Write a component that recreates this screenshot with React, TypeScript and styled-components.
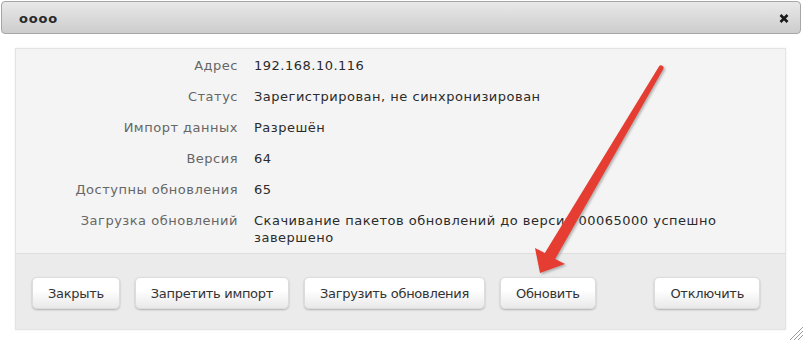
import React from "react";
import styled, { createGlobalStyle } from "styled-components";

const Global = createGlobalStyle`
  html, body { margin: 0; padding: 0; background: #ffffff; }
  body { font-family: "DejaVu Sans", Verdana, sans-serif; font-size: 13px; color: #333; }
`;

const Page = styled.div`
  position: relative;
  width: 803px;
  height: 340px;
  padding: 1px 0 0 1px;
  box-sizing: border-box;
  overflow: hidden;
`;

const Header = styled.div`
  width: 800px;
  height: 33px;
  box-sizing: border-box;
  border: 1px solid #a6a6a6;
  border-radius: 4px;
  background: linear-gradient(#e8e8e8, #cdcdcd);
  display: flex;
  align-items: center;
  justify-content: space-between;
  padding: 2px 11px 0 17px;
`;

const Title = styled.span`
  font-weight: bold;
  font-size: 13px;
  letter-spacing: 0.8px;
  color: #2a2a2a;
`;

const CloseIcon = styled.svg`
  width: 10px;
  height: 9px;
  display: block;
`;

const Panel = styled.div`
  margin: 14px 0 0 14px;
  width: 771px;
  height: 282px;
  box-sizing: border-box;
  border: 1px solid #e4e4e4;
  box-shadow: 0 0 2px rgba(0, 0, 0, 0.08);
  display: flex;
  flex-direction: column;
`;

const Info = styled.div`
  background: #f4f4f4;
  border-bottom: 1px solid #dedede;
  display: grid;
  grid-template-columns: 222px 482px;
  column-gap: 16px;
  padding: 1px 0 0 0;
  letter-spacing: 0.5px;
`;

const Label = styled.div`
  text-align: right;
  color: #666;
  line-height: 17px;
  padding: 7px 0 7px;
`;

const Value = styled.div`
  color: #2b2b2b;
  line-height: 17px;
  padding: 7px 0 7px;
`;

const Footer = styled.div`
  flex: 1;
  background: #ebebeb;
  display: flex;
  align-items: flex-start;
  gap: 15px;
  padding: 23px 25px 0 16px;
`;

const Button = styled.button<{ $push?: boolean }>`
  font-family: "DejaVu Sans", Verdana, sans-serif;
  font-size: 13px;
  letter-spacing: -0.3px;
  color: #333;
  height: 32px;
  padding: 0 15px;
  border: 1px solid #dcdcdc;
  border-radius: 5px;
  background: linear-gradient(#ffffff 40%, #e9e9e9);
  box-shadow: 0 1px 2px rgba(0, 0, 0, 0.25);
  margin-left: ${(p) => (p.$push ? "auto" : "0")};
  cursor: pointer;
`;

const Overlay = styled.svg`
  position: absolute;
  left: 0;
  top: 0;
  width: 803px;
  height: 340px;
  pointer-events: none;
`;

const rows: [string, React.ReactNode][] = [
  ["Адрес", "192.168.10.116"],
  ["Статус", "Зарегистрирован, не синхронизирован"],
  ["Импорт данных", "Разрешён"],
  ["Версия", "64"],
  ["Доступны обновления", "65"],
  [
    "Загрузка обновлений",
    "Скачивание пакетов обновлений до версии 00065000 успешно завершено",
  ],
];

export default function App() {
  return (
    <>
      <Global />
      <Page>
        <Header>
          <Title>oooo</Title>
          <CloseIcon viewBox="0 0 10 9">
            <path d="M1.5 1 L8.5 8 M8.5 1 L1.5 8" stroke="#1a1a1a" strokeWidth="2.6" strokeLinecap="butt" />
          </CloseIcon>
        </Header>
        <Panel>
          <Info>
            {rows.map(([l, v]) => (
              <React.Fragment key={l}>
                <Label>{l}</Label>
                <Value>{v}</Value>
              </React.Fragment>
            ))}
          </Info>
          <Footer>
            <Button>Закрыть</Button>
            <Button>Запретить импорт</Button>
            <Button>Загрузить обновления</Button>
            <Button>Обновить</Button>
            <Button $push>Отключить</Button>
          </Footer>
        </Panel>
        <Overlay viewBox="0 0 803 340">
          <defs>
            <filter id="sh" x="-20%" y="-20%" width="140%" height="140%">
              <feDropShadow dx="1.5" dy="1.5" stdDeviation="1" floodColor="#777" floodOpacity="0.55" />
            </filter>
          </defs>
          <path
            d="M658.8,66.7 A2.5,2.5 0 0 1 663.2,69.3 L555.2,259 L565,264 L540,273 L535,248 L544.8,253 Z"
            fill="#e63d30"
            filter="url(#sh)"
          />
          <g stroke="#9a9a9a" strokeWidth="1">
            <line x1="803" y1="327" x2="790" y2="340" />
            <line x1="803" y1="331" x2="794" y2="340" />
            <line x1="803" y1="335" x2="798" y2="340" />
          </g>
        </Overlay>
      </Page>
    </>
  );
}
